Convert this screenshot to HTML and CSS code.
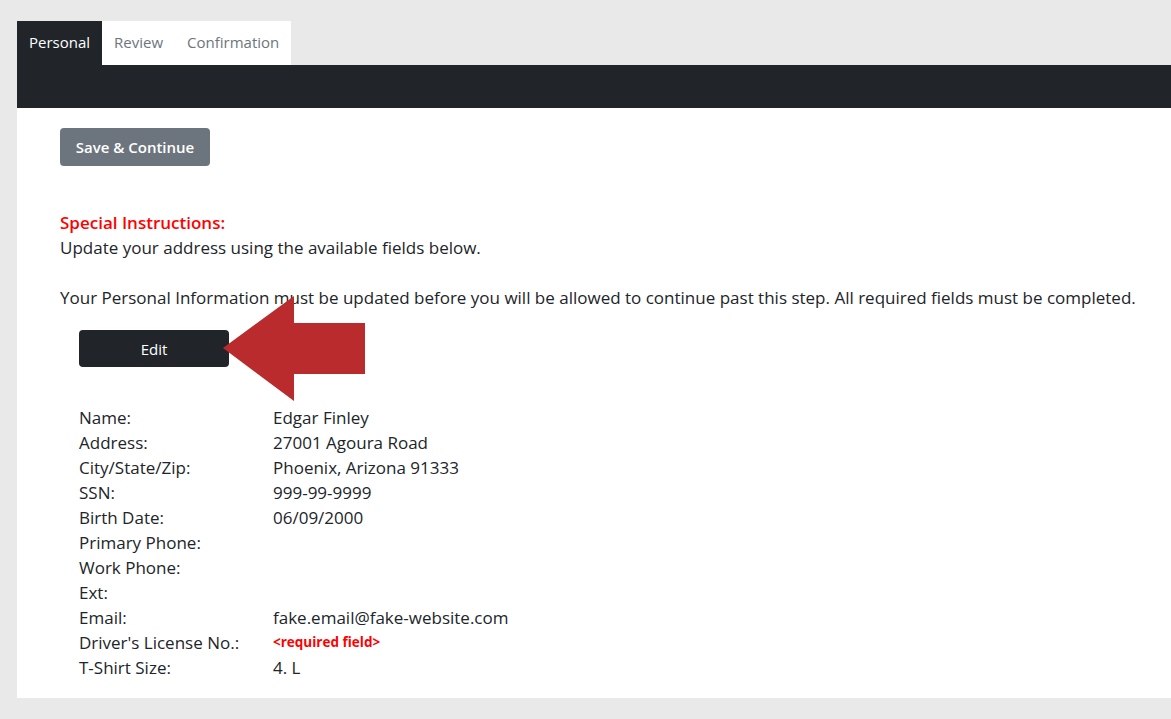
FILE: index.html
```html
<!DOCTYPE html>
<html lang="en">
<head>
    <meta charset="UTF-8">
    <meta name="viewport" content="width=device-width, initial-scale=1.0">
    <title>Personal Information</title>
    <link rel="stylesheet" href="styles.css">
</head>
<body>
    <div class="panel">
        <div class="tabs">
            <div class="tab active">Personal</div>
            <div class="tab">Review</div>
            <div class="tab">Confirmation</div>
        </div>
        <div class="tab-bar"></div>

        <div class="content">
            <button class="btn btn-secondary">Save &amp; Continue</button>

            <div class="instructions">
                <div class="instructions-title">Special Instructions:</div>
                <div>Update your address using the available fields below.</div>
                <div>&nbsp;</div>
                <div>Your Personal Information must be updated before you will be allowed to continue past this step. All required fields must be completed.</div>
            </div>

            <div class="edit-row">
                <button class="btn btn-dark">Edit</button>
                <!-- annotation arrow pointing at the Edit button -->
                <svg class="arrow" width="144" height="107" viewBox="0 0 144 107">
                    <polygon points="0,52 71,0 71,27 142,27 142,78 71,78 71,105" fill="#b92b2c"/>
                </svg>
            </div>

            <div class="details">
                <div class="label">Name:</div><div>Edgar Finley</div>
                <div class="label">Address:</div><div>27001 Agoura Road</div>
                <div class="label">City/State/Zip:</div><div>Phoenix, Arizona 91333</div>
                <div class="label">SSN:</div><div>999-99-9999</div>
                <div class="label">Birth Date:</div><div>06/09/2000</div>
                <div class="label">Primary Phone:</div><div></div>
                <div class="label">Work Phone:</div><div></div>
                <div class="label">Ext:</div><div></div>
                <div class="label">Email:</div><div>fake.email@fake-website.com</div>
                <div class="label">Driver's License No.:</div><div class="required">&lt;required field&gt;</div>
                <div class="label">T-Shirt Size:</div><div>4. L</div>
            </div>
        </div>
    </div>
</body>
</html>
```

FILE: styles.css
```css
body {
    margin: 0;
    padding: 21px 0 21px 17px;
    background: #e9e9e9;
    font-family: "Open Sans", sans-serif;
    font-size: 17px;
    line-height: 25px;
    color: #212529;
}
.panel {
    background: white;
}
.tabs {
    display: flex;
    background: #e9e9e9;
}
.tab {
    background: white;
    color: #6c757d;
    font-size: 15px;
    height: 44px;
    line-height: 43px;
    padding: 0 12px;
}
.tab.active {
    background: #212529;
    color: white;
}
.tab-bar {
    height: 43px;
    background: #212529;
}
.content {
    padding: 20px 0 18px 43px;
}
.btn {
    font-family: inherit;
    font-size: 15px;
    color: white;
    border: none;
    border-radius: 4px;
    width: 150px;
    height: 38px;
    padding: 0;
}
.btn-secondary {
    background: #6c757d;
    font-weight: 600;
    display: block;
}
.btn-dark {
    background: #212529;
    height: 37px;
}
.instructions {
    margin-top: 44px;
}
.instructions-title {
    color: #ff0000;
    font-weight: 600;
}
.edit-row {
    position: relative;
    margin: 20px 0 0 19px;
    height: 37px;
}
.arrow {
    position: absolute;
    left: 144px;
    top: -34px;
}
.details {
    display: grid;
    grid-template-columns: 194px 1fr;
    grid-auto-rows: 25px;
    margin: 38px 0 0 19px;
}
.required {
    color: #ff0000;
    font-weight: bold;
    font-size: 13.5px;
}
```
